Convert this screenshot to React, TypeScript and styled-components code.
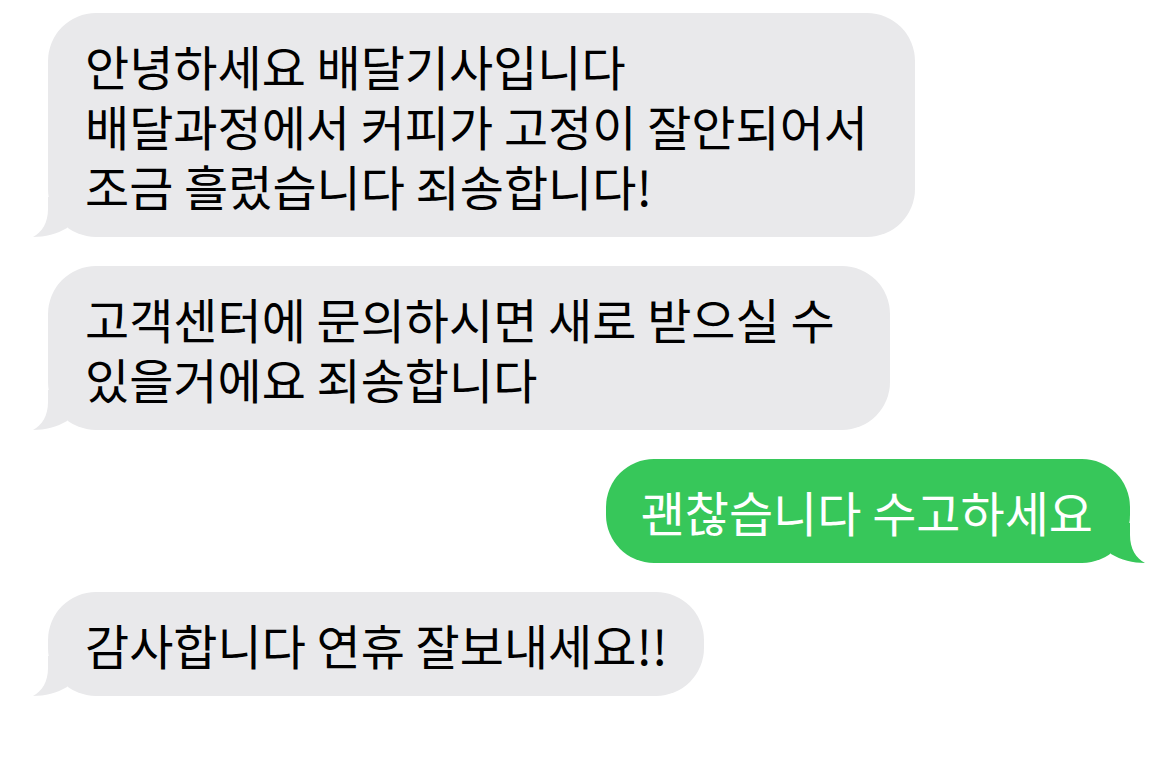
import styled, { createGlobalStyle } from 'styled-components';

const GlobalStyle = createGlobalStyle`
  html, body {
    margin: 0;
    padding: 0;
    background: #ffffff;
  }
  body {
    font-family: "Noto Sans CJK KR", "Noto Sans", sans-serif;
    -webkit-font-smoothing: antialiased;
  }
`;

const Thread = styled.div`
  display: flex;
  flex-direction: column;
  gap: 29px;
  padding: 13px 44px 0 48px;
  width: 1174px;
  box-sizing: border-box;
`;

const Row = styled.div<{ $mine?: boolean }>`
  display: flex;
  justify-content: ${p => (p.$mine ? 'flex-end' : 'flex-start')};
`;

const Bubble = styled.div<{ $mine?: boolean; $w?: number }>`
  position: relative;
  box-sizing: border-box;
  width: ${p => (p.$w ? `${p.$w}px` : 'auto')};
  padding: ${p => (p.$mine ? '22px 37px 22px 35px' : '22px 37px')};
  border-radius: 48px;
  background: ${p => (p.$mine ? '#37c75a' : '#e9e9eb')};
  color: ${p => (p.$mine ? '#ffffff' : '#000000')};
  font-size: 48px;
  line-height: 60px;
  white-space: nowrap;
`;

const Line = styled.div`
  height: 60px;
`;

const Tail = styled.svg<{ $mine?: boolean }>`
  position: absolute;
  bottom: 0;
  width: 50px;
  height: 40px;
  overflow: visible;
  ${p => (p.$mine ? 'right: -15px; transform: scaleX(-1);' : 'left: -15px;')}
`;

function BubbleTail({ mine, color }: { mine?: boolean; color: string }) {
  return (
    <Tail $mine={mine} viewBox="0 0 50 40">
      <path d="M15,0 L15,12 C15,26 9,35 0,40 C12,40 24,37 34,31 L34,0 Z" fill={color} />
    </Tail>
  );
}

interface Msg {
  lines: string[];
  mine?: boolean;
  w?: number;
}

const messages: Msg[] = [
  { lines: ['안녕하세요 배달기사입니다', '배달과정에서 커피가 고정이 잘안되어서', '조금 흘렀습니다 죄송합니다!'], w: 867 },
  { lines: ['고객센터에 문의하시면 새로 받으실 수', '있을거에요 죄송합니다'], w: 842 },
  { lines: ['괜찮습니다 수고하세요'], mine: true },
  { lines: ['감사합니다 연휴 잘보내세요!!'] },
];

export default function App() {
  return (
    <>
      <GlobalStyle />
      <Thread>
        {messages.map((m, i) => (
          <Row key={i} $mine={m.mine}>
            <Bubble $mine={m.mine} $w={m.w}>
              {m.lines.map((l, j) => (
                <Line key={j}>{l}</Line>
              ))}
              <BubbleTail mine={m.mine} color={m.mine ? '#37c75a' : '#e9e9eb'} />
            </Bubble>
          </Row>
        ))}
      </Thread>
    </>
  );
}
